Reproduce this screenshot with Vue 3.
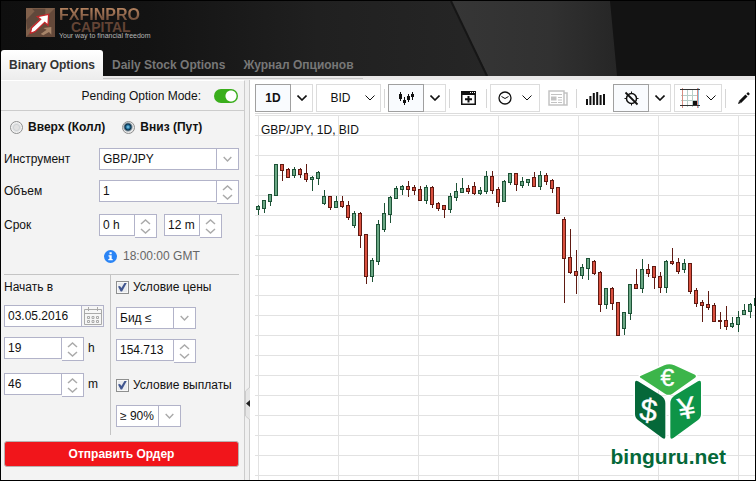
<script setup>
import { ref } from 'vue'

const tabs = ['Binary Options', 'Daily Stock Options', 'Журнал Опционов']
const activeTab = ref(0)
const pending = ref(true)
const direction = ref('put')
const volume = ref('1')
const hours = ref('0 h')
const minutes = ref('12 m')
const startDate = ref('03.05.2016')
const startHour = ref('19')
const startMinute = ref('46')
const priceOn = ref(true)
const payoutOn = ref(true)
const price = ref('154.713')

// Each candle: trend, high, body top, body bottom, low
const candles = `
g 90 91 95 100|g 85 85 94 98|g 79 79 87 91|g 49 49 81 81|r 49 49 56 66|r 53 54 63 63|g 52 54 61 63|r 53 54 60 63
r 49 58 65 67|g 61 62 65 76|g 56 57 64 70|g 75 81 89 90|r 81 81 93 95|g 81 86 93 93|r 81 86 92 93|r 86 90 103 105
g 96 98 111 113|r 97 98 121 133|r 119 119 162 169|g 143 145 162 167|g 105 109 147 150|g 88 98 115 117|g 81 82 100 108|g 71 73 84 84
g 70 71 75 80|r 66 71 75 82|r 70 72 76 80|r 71 74 86 86|g 70 72 86 89|r 71 72 90 93|r 87 88 94 96|r 90 90 95 103
g 78 81 95 98|g 68 76 83 86|g 63 73 78 78|r 70 73 77 79|r 67 71 79 80|g 72 75 79 80|g 56 61 77 79|r 56 61 76 79
r 72 74 88 92|g 65 66 87 87|g 58 58 68 70|r 58 58 70 76|g 62 66 71 73|g 64 64 68 71|r 57 62 72 72|g 56 60 72 75
r 58 60 67 70|r 64 65 74 78|r 72 72 99 99|r 102 104 144 188|r 114 142 158 159|r 135 156 161 179|g 149 152 161 164|g 143 143 154 165
r 145 146 159 160|r 156 157 190 197|g 173 173 190 194|r 172 173 189 195|r 187 187 221 221|g 197 197 214 220|g 169 169 199 205|r 154 169 174 174
g 144 154 174 178|r 149 154 159 162|r 151 151 163 174|r 157 161 173 178|g 145 146 173 178|r 133 146 149 150|r 143 147 157 159|g 144 148 155 158
r 148 148 177 179|r 173 175 189 192|r 185 187 191 207|r 176 189 193 195|r 188 190 207 207|r 197 205 207 214|r 191 205 212 215|g 202 208 212 213
g 196 202 210 217|g 189 195 200 200|g 188 189 197 203|g 183 183 191 191`
  .trim()
  .split(/[|\n]/)
  .map((row, i) => {
    const [trend, ...values] = row.split(' ')
    const [high, top, bottom, low] = values.map(Number)
    return { trend, high, top, bottom, low, x: 1 + i * 6 }
  })
</script>

<template>
  <div class="app">
    <header class="header">
      <svg class="backdrop" viewBox="0 0 754 75" preserveAspectRatio="none" aria-hidden="true">
        <defs>
          <linearGradient id="shadeLeft"><stop offset="0" stop-color="#0f0f0f" /><stop offset=".3" stop-color="#131313" /><stop offset=".65" stop-color="#202020" /><stop offset="1" stop-color="#262626" /></linearGradient>
          <linearGradient id="shadeMid"><stop offset="0" stop-color="#363636" /><stop offset=".6" stop-color="#313131" /><stop offset="1" stop-color="#262626" /></linearGradient>
        </defs>
        <rect width="754" height="75" fill="#131313" />
        <path d="M0 0H450L487 75H0Z" fill="url(#shadeLeft)" />
        <path d="M450 0H609L616 75H487Z" fill="url(#shadeMid)" />
        <path d="M450 0L486 75" stroke="#161616" stroke-width="2" />
      </svg>
      <div class="brand">
        <svg class="brand-mark" width="29" height="29" viewBox="0 0 87 87" aria-hidden="true">
          <rect width="87" height="87" fill="#65493a" />
          <path d="M0 0H87L0 87Z" fill="#80604b" />
          <path d="M0 36L26 10L18 2H58V18L4 66Z" fill="#60483b" />
          <path d="M44 78L62 65L52 60L76 57V80L69 72L52 82Z" fill="#a78569" />
          <path d="M13 76L17 59L44 34L34 26L68 19L66 52L56 43L27 71Z" fill="#fff" stroke="#c4262a" stroke-width="4" />
        </svg>
        <div class="brand-words">
          <span class="brand-name">FXFINPRO</span>
          <span class="brand-sub">CAPITAL</span>
          <span class="brand-tag">Your way to financial freedom</span>
        </div>
      </div>
      <nav class="tabs">
        <button v-for="(tab, i) in tabs" :key="tab" type="button" class="tab" :class="{ active: i === activeTab }" @click="activeTab = i">{{ tab }}</button>
      </nav>
    </header>

    <div class="body">
      <form class="panel" @submit.prevent>
        <label class="pending">
          <span>Pending Option Mode:</span>
          <input v-model="pending" class="switch" type="checkbox" role="switch" />
        </label>

        <div class="form">
          <div class="directions">
            <label><input v-model="direction" type="radio" name="direction" value="call" />Вверх (Колл)</label>
            <label><input v-model="direction" type="radio" name="direction" value="put" />Вниз (Пут)</label>
          </div>
          <div class="field">
            <label for="instrument">Инструмент</label>
            <div class="combo wide">
              <select id="instrument"><option>GBP/JPY</option></select>
              <svg class="drop" viewBox="0 0 22 20"><path d="M7 8L11 12L15 8" /></svg>
            </div>
          </div>
          <div class="field">
            <label for="volume">Объем</label>
            <div class="spin wide">
              <input id="volume" v-model="volume" type="text" />
              <button type="button" aria-label="±"><svg viewBox="0 0 21 22"><path d="M6 9L10.500 5L15 9M6 14L10.500 18L15 14" /></svg></button>
            </div>
          </div>
          <div class="field">
            <label for="hours">Срок</label>
            <div class="terms">
              <div class="spin small">
                <input id="hours" v-model="hours" type="text" />
                <button type="button" aria-label="±"><svg viewBox="0 0 21 22"><path d="M6 9L10.500 5L15 9M6 14L10.500 18L15 14" /></svg></button>
              </div>
              <div class="spin small">
                <input v-model="minutes" type="text" aria-label="m" />
                <button type="button" aria-label="±"><svg viewBox="0 0 21 22"><path d="M6 9L10.500 5L15 9M6 14L10.500 18L15 14" /></svg></button>
              </div>
            </div>
          </div>
          <div class="expiry">
            <svg width="13" height="13" viewBox="0 0 13 13" aria-hidden="true"><circle cx="6.500" cy="6.500" r="6.500" fill="#2a84f5" /><path d="M5.500 2.200H7.700V4.200H5.500ZM4.500 5.200H7.700V9H8.700V10.300H4.300V9H5.400V6.400H4.500Z" fill="#fff" /></svg>
            <span>18:00:00 GMT</span>
          </div>

          <div class="conditions">
            <div class="start">
              <label class="caption" for="start-date">Начать в</label>
              <div class="date">
                <input id="start-date" v-model="startDate" type="text" />
                <button type="button" aria-label="Начать в">
                  <svg width="18" height="18" viewBox="0 0 18 18" fill="none" stroke="#aaa"><path d="M.5 2.500H17.500V17.500H.5ZM.5 6.500H17.500M4.500 0V4M13.500 0V4" /><path d="M3.500 9.500H5.500V11.500H3.500ZM8 9.500H10V11.500H8ZM12.500 9.500H14.500V11.500H12.500ZM3.500 13.500H5.500V15.500H3.500ZM8 13.500H10V15.500H8ZM12.500 13.500H14.500V15.500H12.500Z" /></svg>
                </button>
              </div>
              <div class="times">
                <div class="time">
                  <div class="spin medium">
                    <input id="start-hour" v-model="startHour" type="text" />
                    <button type="button" aria-label="±"><svg viewBox="0 0 21 22"><path d="M6 9L10.500 5L15 9M6 14L10.500 18L15 14" /></svg></button>
                  </div>
                  <label for="start-hour">h</label>
                </div>
                <div class="time">
                  <div class="spin medium">
                    <input id="start-minute" v-model="startMinute" type="text" />
                    <button type="button" aria-label="±"><svg viewBox="0 0 21 22"><path d="M6 9L10.500 5L15 9M6 14L10.500 18L15 14" /></svg></button>
                  </div>
                  <label for="start-minute">m</label>
                </div>
              </div>
            </div>
            <div class="rules">
              <div class="rule">
                <label class="check"><input v-model="priceOn" type="checkbox" />Условие цены</label>
                <div class="rule-fields">
                  <div class="combo medium">
                    <select aria-label="Условие цены"><option>Бид ≤</option></select>
                    <svg class="drop" viewBox="0 0 22 20"><path d="M7 8L11 12L15 8" /></svg>
                  </div>
                  <div class="spin medium">
                    <input v-model="price" type="text" aria-label="Условие цены" />
                    <button type="button" aria-label="±"><svg viewBox="0 0 21 22"><path d="M6 9L10.500 5L15 9M6 14L10.500 18L15 14" /></svg></button>
                  </div>
                </div>
              </div>
              <div class="rule">
                <label class="check"><input v-model="payoutOn" type="checkbox" />Условие выплаты</label>
                <div class="combo narrow">
                  <select aria-label="Условие выплаты"><option>≥ 90%</option></select>
                  <svg class="drop" viewBox="0 0 22 20"><path d="M7 8L11 12L15 8" /></svg>
                </div>
              </div>
            </div>
          </div>
          <button class="submit" type="submit">Отправить Ордер</button>
        </div>
      </form>

      <div class="splitter">
        <svg class="handle" width="5" height="33" viewBox="0 0 5 33" aria-hidden="true"><path d="M5 0L.5 4V29L5 33" fill="#e6e6e6" stroke="#ccc" /><path d="M5 13V20L1 16.500Z" fill="#222" /></svg>
      </div>

      <main class="chart">
        <div class="toolbar">
          <div class="group">
            <button type="button" class="tool on">1D</button>
            <button type="button" class="tool arrow" aria-label="1D"><svg width="10" height="6" viewBox="0 0 10 6"><path d="M.5 .5L5 5L9.500 .5" /></svg></button>
          </div>
          <button type="button" class="tool bid">BID<svg width="10" height="6" viewBox="0 0 10 6"><path d="M.5 .5L5 5L9.500 .5" /></svg></button>
          <i class="sep"></i>
          <div class="group">
            <button type="button" class="tool on" aria-label="Candles">
              <svg width="17" height="15" viewBox="0 0 17 15"><path d="M2.500 1V10M6.500 6V14M10.500 3V11M14.500 1V9" /><path d="M1 3H4V8H1ZM5 9H8V12H5ZM9 5H12V9H9ZM13 3H16V6H13Z" class="fill" /></svg>
            </button>
            <button type="button" class="tool arrow" aria-label="Candles"><svg width="10" height="6" viewBox="0 0 10 6"><path d="M.5 .5L5 5L9.500 .5" /></svg></button>
          </div>
          <i class="sep"></i>
          <button type="button" class="tool bare" aria-label="New window">
            <svg width="15" height="14" viewBox="0 0 15 14"><path d="M0 0H15V14H0ZM1.500 4V12.500H13.500V4Z" fill-rule="evenodd" class="fill" /><path d="M9 1.500H10M11 1.500H12M13 1.500H14" class="dots" /><path d="M7.500 5V11.500M4 8.200H11" stroke-width="2" /></svg>
          </button>
          <i class="sep"></i>
          <button type="button" class="tool clock" aria-label="Time">
            <svg width="14" height="14" viewBox="0 0 14 14"><circle cx="7" cy="7" r="6" stroke-width="1.300" /><path d="M3.500 5.500L7 7.500L10.500 5.500" /></svg>
            <svg width="10" height="6" viewBox="0 0 10 6"><path d="M.5 .5L5 5L9.500 .5" /></svg>
          </button>
          <button type="button" class="tool bare news" aria-label="News">
            <svg width="20" height="16" viewBox="0 0 20 16"><path d="M1 1H16V15H1ZM16 3H19V15H16" stroke-width="1.500" /><path d="M3 4.500H14M3 12.500H9M10 7.500H14M10 10H14M10 12.500H14" /><path d="M3 6.500H8.500V10.500H3Z" class="fill" /></svg>
          </button>
          <i class="sep"></i>
          <button type="button" class="tool bare" aria-label="Volume">
            <svg width="19" height="13" viewBox="0 0 19 13" stroke-width="2"><path d="M1 13V7M4.400 13V4M7.800 13V1M11.200 13V0M14.600 13V3M18 13V2" /></svg>
          </button>
          <div class="group">
            <button type="button" class="tool on" aria-label="Crosshair">
              <svg width="15" height="15" viewBox="0 0 15 15"><circle cx="7.500" cy="7.500" r="5" stroke-width="1.500" /><path d="M7.500 .5V3M7.500 12V14.500M.5 7.500H3M12 7.500H14.500" /><path d="M1.500 1.500L13.500 13.500" stroke-width="1.800" /></svg>
            </button>
            <button type="button" class="tool arrow" aria-label="Crosshair"><svg width="10" height="6" viewBox="0 0 10 6"><path d="M.5 .5L5 5L9.500 .5" /></svg></button>
          </div>
          <button type="button" class="tool layout" aria-label="Grid">
            <svg width="20" height="20" viewBox="0 0 20 20"><path d="M7.500 1V19M12.500 1V19M1 7.500H19M1 12.500H19" stroke="#b7cdc8" /><path d="M2.500 0V20" stroke="#d68c80" /><path d="M17.500 0V20" stroke="#dc8a80" /><path d="M18.500 0V20" stroke="#8ec5e6" /><path d="M0 1.500H20M0 17.500H20" stroke="#333" /><path d="M13 13H17V17H13Z" class="fill" /></svg>
            <svg width="10" height="6" viewBox="0 0 10 6"><path d="M.5 .5L5 5L9.500 .5" /></svg>
          </button>
          <i class="sep"></i>
          <button type="button" class="tool bare" aria-label="Draw">
            <svg width="12" height="12" viewBox="0 0 12 12"><path d="M2 10L8.500 3.500" stroke-width="3" /><path d="M9.300 2.700L11 1" stroke-width="2.600" /><path d="M0 12L1 9L3 11Z" class="fill" /></svg>
          </button>
        </div>
        <div class="plot">
          <svg class="canvas" role="img" aria-label="GBP/JPY">
            <defs>
              <pattern id="mesh" x="3" y="0" width="80" height="20" patternUnits="userSpaceOnUse"><path d="M0 .5H80M.5 0V20" stroke="#e2e2e2" fill="none" /></pattern>
            </defs>
            <rect width="100%" height="100%" fill="url(#mesh)" />
            <g v-for="c in candles" :key="c.x" :class="c.trend">
              <rect class="edge" :x="c.x + 2" :y="c.high" width="1" :height="c.low - c.high" />
              <rect class="edge" :x="c.x" :y="c.top" width="4" :height="c.bottom - c.top" />
              <rect class="core" :x="c.x + 1" :y="c.top + 1" width="2" :height="c.bottom - c.top - 2" />
            </g>
            <text x="6" y="19">GBP/JPY, 1D, BID</text>
          </svg>
          <div class="watermark">
            <svg width="70" height="79" viewBox="96 36 210 237" aria-hidden="true">
              <g stroke="#fff" stroke-width="10" fill="#fff" stroke-linejoin="round"><path d="M117 79L190 46Q205 38 220 46L284 77L203 135Z" /><path d="M102 95L192 150V267L102 196Z" /><path d="M300 95L208 150V267L300 196Z" /></g>
              <path d="M120 77L190 46Q205 39 220 46L282 74Q288 79 281 84L214 131Q203 138 192 131L120 84Q113 80 120 77Z" fill="#3cb54a" />
              <path d="M102 99Q102 89 111 94L179 136Q193 145 193 160V260Q193 270 184 264L112 211Q102 204 102 192Z" fill="#056839" />
              <path d="M300 99Q300 89 291 94L222 136Q208 145 208 160V260Q208 270 217 264L290 211Q300 204 300 192Z" fill="#0e9447" />
              <g class="currencies">
                <text x="199" y="109" font-size="74">€</text>
                <text x="143" y="213" font-size="94" transform="rotate(8 145 180)">$</text>
                <text x="257" y="206" font-size="92" transform="rotate(-10 257 176)">¥</text>
              </g>
            </svg>
            <span class="site">binguru.net</span>
          </div>
        </div>
      </main>
    </div>
  </div>
</template>

<style>
body {
  margin: 0;
}
</style>

<style scoped>
* {
  box-sizing: border-box;
}
.app {
  display: flex;
  flex-direction: column;
  min-height: 100vh;
  border: 1px solid #000;
  background: #f3f3f3;
  color: #111;
  font: 12px/16px "Liberation Sans", Arial, sans-serif;
}
button,
input,
select {
  margin: 0;
  padding: 0;
  border: 0;
  border-radius: 0;
  color: inherit;
  font: inherit;
}
svg {
  display: block;
  flex: none;
}
.header {
  position: relative;
  background: #e9e8e8;
}
.backdrop {
  position: absolute;
  top: 0;
  left: 0;
  width: 100%;
  height: 75px;
}
.brand {
  position: relative;
  display: flex;
  gap: 4px;
  height: 49px;
  padding: 7px 25px;
}
.brand-words {
  display: flex;
  flex-direction: column;
  color: #8a634a;
  font-weight: bold;
}
.brand-name {
  font-size: 16px;
  line-height: 13px;
  color: transparent;
  background: linear-gradient(#b58360, #6b4b39);
  background-clip: text;
}
.brand-sub {
  align-self: center;
  padding-right: 8px;
  font-size: 14px;
  line-height: 12px;
  color: #634435;
}
.brand-tag {
  font-size: 7px;
  line-height: 6px;
  font-weight: normal;
  color: #b5b5b5;
}
.tabs {
  position: relative;
  display: inline-flex;
  vertical-align: top;
  height: 30px;
  background: linear-gradient(#c6c6c6, #c6c6c6) 0 28px / 100% 1px no-repeat;
}
.tab {
  padding: 0 9px;
  background: none;
  color: #777;
  font-weight: bold;
}
.tab.active {
  padding: 0 8px;
  border-radius: 3px 3px 0 0;
  background: linear-gradient(#fff, #ececec);
  color: #333;
}
.body {
  display: flex;
  flex: 1;
}
.panel {
  flex: none;
  width: 244px;
  border-top: 1px solid #fff;
  border-right: 1px solid #ccc;
}
.pending {
  display: flex;
  align-items: center;
  justify-content: flex-end;
  gap: 13px;
  height: 30px;
  padding-right: 6px;
  border-bottom: 1px solid #ccc;
}
.switch {
  appearance: none;
  width: 24px;
  height: 14px;
  border-radius: 7px;
  background: radial-gradient(circle at 17px 7px, #fff 5px, transparent 6px) #3aae1c;
}
.form {
  display: flex;
  flex-direction: column;
  gap: 10px;
  padding: 5px 5px 13px 3px;
}
.directions {
  display: flex;
  gap: 17px;
  height: 22px;
  padding-left: 6px;
  font-weight: bold;
}
.directions label,
.check {
  display: flex;
  align-items: center;
  gap: 5px;
}
.directions input {
  appearance: none;
  width: 13px;
  height: 13px;
  border: 1px solid #8e8f8f;
  border-radius: 50%;
  background: radial-gradient(circle, #e2e2e2 2px, #d0d3d5 3px, #f4f4f4 5px);
}
.directions input:checked {
  background: radial-gradient(circle at 5px 5px, #8bd5f5 0, #1c6b97 2px, #0b3049 3px, #e8e8e8 5px);
}
.field {
  display: flex;
  justify-content: space-between;
}
.field > label {
  line-height: 22px;
}
.wide {
  width: 140px;
}
.small {
  width: 58px;
}
.medium {
  width: 80px;
}
.narrow {
  width: 65px;
}
.combo {
  position: relative;
  height: 22px;
  border: 1px solid #b2b3c9;
  background: #fff;
}
.combo select {
  appearance: none;
  width: 100%;
  height: 20px;
  padding: 0 22px 0 3px;
  background: transparent;
}
.drop {
  position: absolute;
  top: 0;
  right: 0;
  width: 22px;
  height: 20px;
  border-left: 1px solid #b2b3c9;
  pointer-events: none;
}
.drop,
.spin svg {
  fill: none;
  stroke: #aaa;
  stroke-width: 1.5;
}
.spin {
  display: flex;
  align-items: flex-start;
}
.spin input {
  flex: 1;
  min-width: 0;
  height: 22px;
  padding: 0 3px;
  border: 1px solid #b2b3c9;
  background: #fff;
}
.spin button {
  width: 22px;
  height: 24px;
  border: 1px solid #b2b3c9;
  border-left: 0;
  background: #fff;
}
.terms {
  display: flex;
  gap: 7px;
  width: 140px;
}
.expiry {
  display: flex;
  align-items: center;
  gap: 6px;
  padding-left: 100px;
  color: #666;
}
.conditions {
  display: flex;
  border-top: 1px solid #c4c4c4;
}
.start {
  display: flex;
  flex-direction: column;
  gap: 10px;
  width: 107px;
  padding-top: 4px;
  border-right: 1px solid #c4c4c4;
}
.date {
  display: flex;
  width: 100px;
  height: 22px;
  border: 1px solid #b2b3c9;
  background: #fff;
}
.date input {
  flex: 1;
  min-width: 0;
  padding: 0 3px;
  background: transparent;
}
.date button {
  display: grid;
  place-items: center;
  width: 22px;
  border-left: 1px solid #b2b3c9;
  background: #f6f6f6;
}
.times {
  display: flex;
  flex-direction: column;
  gap: 12px;
}
.time {
  display: flex;
  gap: 4px;
  line-height: 22px;
}
.rules {
  display: flex;
  flex-direction: column;
  gap: 14px;
  padding: 4px 0 8px 5px;
}
.rule {
  display: flex;
  flex-direction: column;
  gap: 12px;
}
.rule-fields {
  display: flex;
  flex-direction: column;
  gap: 10px;
}
.check {
  gap: 4px;
}
.check input {
  appearance: none;
  display: grid;
  place-items: center;
  width: 13px;
  height: 13px;
  border: 1px solid #8e8f8f;
  background: #e9ebee;
  box-shadow: inset 0 0 0 1px #f8f8f8;
}
.check input:checked::before {
  content: "";
  width: 9px;
  height: 9px;
  background: #40558f;
  clip-path: polygon(0 45%, 22% 38%, 38% 62%, 75% 0, 100% 0, 45% 100%, 30% 100%);
}
.submit {
  height: 26px;
  margin-top: -4px;
  border: 1px solid #b9b0b0;
  border-radius: 3px;
  background: #f1151b;
  color: #fff;
  font-weight: bold;
}
.splitter {
  display: flex;
  align-items: flex-end;
  flex: none;
  width: 5px;
  padding-bottom: 60px;
  border-right: 1px solid #ccc;
  background: #f0f0f0;
}
.chart {
  display: flex;
  flex-direction: column;
  flex: 1;
  min-width: 0;
  padding-left: 5px;
  background: #fff;
}
.toolbar {
  display: flex;
  align-items: center;
  gap: 3px;
  height: 34px;
  padding-top: 3px;
  border-bottom: 1px solid #dcdcdc;
  overflow: hidden;
}
.group {
  display: flex;
  flex: none;
}
.tool {
  display: flex;
  align-items: center;
  justify-content: center;
  flex: none;
  height: 28px;
  border: 1px solid #dcdcdc;
  background: #fff;
}
.tool svg {
  fill: none;
  stroke: #111;
}
.tool .fill {
  fill: #111;
  stroke: none;
}
.tool .dots {
  stroke: #fff;
}
.tool.on {
  width: 36px;
  border-color: #a0a0a0;
  background: #f9fbfe;
  font-weight: bold;
}
.tool.arrow {
  width: 22px;
  border-left: 0;
}
.arrow svg {
  stroke-width: 1.6;
}
.tool.bid {
  gap: 14px;
  width: 65px;
  padding-left: 8px;
}
.tool.bare {
  width: 30px;
  border: 0;
}
.tool.clock {
  gap: 10px;
  width: 50px;
}
.tool.layout {
  gap: 6px;
  width: 48px;
}
.tool.news svg {
  stroke: #c3c3c3;
}
.news .fill {
  fill: #c3c3c3;
}
.sep {
  flex: none;
  width: 1px;
  height: 19px;
  background: #d6d6d6;
}
.plot {
  position: relative;
  display: flex;
  flex: 1;
  margin-top: 1px;
}
.canvas {
  flex: 1;
  width: 100%;
  min-width: 0;
  height: auto;
}
.canvas text {
  fill: #111;
}
.r .edge {
  fill: #5f1a12;
}
.r .core {
  fill: #d9503f;
}
.g .edge {
  fill: #1d5236;
}
.g .core {
  fill: #6aa784;
}
.watermark {
  position: absolute;
  right: 29px;
  bottom: 11px;
  display: flex;
  flex-direction: column;
  align-items: center;
  gap: 3px;
}
.currencies {
  fill: #fff;
  stroke: #fff;
  stroke-width: 1;
  text-anchor: middle;
}
.site {
  color: #056839;
  font-size: 21px;
  line-height: 25px;
  font-weight: bold;
  text-shadow: 0 0 2px #fff, 0 0 3px #fff;
}
</style>
